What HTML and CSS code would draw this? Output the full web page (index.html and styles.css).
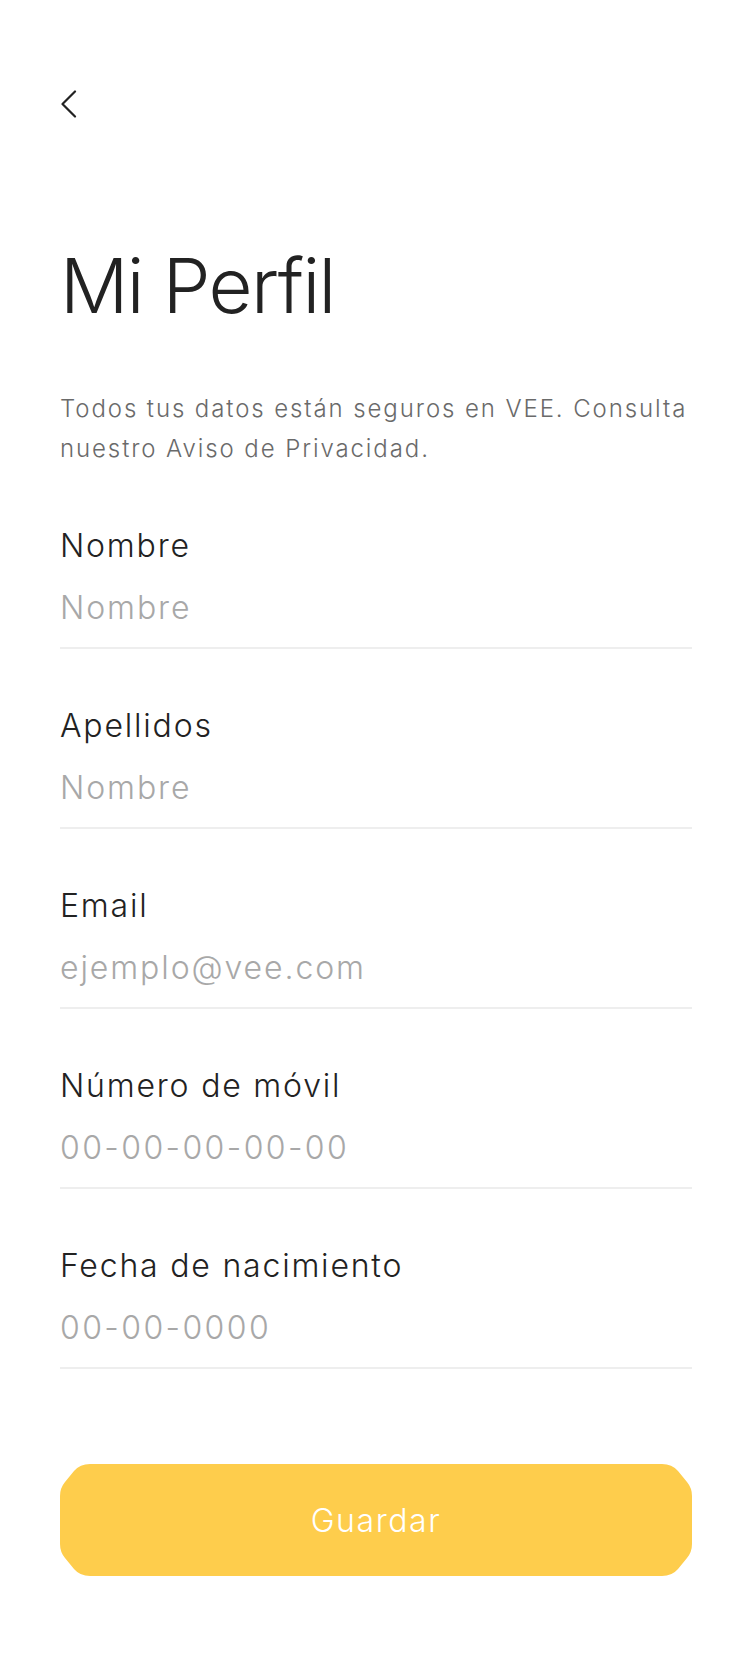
FILE: index.html
```html
<!DOCTYPE html>
<html lang="es">
<head>
<meta charset="utf-8">
<meta name="viewport" content="width=750">
<title>Mi Perfil</title>
<link rel="stylesheet" href="styles.css">
</head>
<body>
<main class="page">
  <header class="topbar">
    <button class="back" type="button" aria-label="Volver">
      <svg width="17" height="28" viewBox="0 0 17 28" fill="none" stroke="#222" stroke-width="2.2" stroke-linecap="round" stroke-linejoin="round"><path d="M15 1.5 L2.5 14 L15 26.5"/></svg>
    </button>
  </header>

  <h1 class="title">Mi Perfil</h1>
  <p class="intro">Todos tus datos están seguros en VEE. Consulta nuestro Aviso de Privacidad.</p>

  <form class="form">
    <div class="field">
      <span class="label">Nombre</span>
      <span class="value">Nombre</span>
    </div>
    <div class="field">
      <span class="label">Apellidos</span>
      <span class="value">Nombre</span>
    </div>
    <div class="field">
      <span class="label">Email</span>
      <span class="value">ejemplo@vee.com</span>
    </div>
    <div class="field">
      <span class="label">Número de móvil</span>
      <span class="value value--num">00-00-00-00-00</span>
    </div>
    <div class="field">
      <span class="label">Fecha de nacimiento</span>
      <span class="value value--num">00-00-0000</span>
    </div>

    <button class="save" type="button">Guardar</button>
  </form>
</main>
</body>
</html>
```

FILE: styles.css
```css
* { box-sizing: border-box; }

html, body {
  margin: 0;
  padding: 0;
  background: #ffffff;
}

body {
  font-family: Inter, "Noto Sans", "Liberation Sans", sans-serif;
  color: #222222;
}

.page {
  width: 750px;
  padding: 0 58px 0 60px;
}

.topbar {
  height: 240px;
  padding-top: 90px;
}

.back {
  display: block;
  margin: 0;
  padding: 0;
  border: 0;
  background: none;
  width: 17px;
  height: 28px;
}

.back svg { display: block; }

.title {
  margin: 0;
  font-size: 76px;
  line-height: 91px;
  font-weight: 300;
  letter-spacing: -1.6px;
  color: #222222;
}

.intro {
  margin: 58px 0 0;
  font-size: 24px;
  line-height: 40px;
  font-weight: 300;
  color: #6a6a6a;
  letter-spacing: 1.9px;
}

.form {
  display: flex;
  flex-direction: column;
}

.field {
  display: flex;
  flex-direction: column;
  margin-top: 57px;
  padding-bottom: 19px;
  border-bottom: 2px solid #eeeeee;
}

.label {
  font-size: 32px;
  line-height: 40px;
  font-weight: 300;
  letter-spacing: 1.8px;
  color: #222222;
}

.value {
  margin-top: 22px;
  font-size: 32px;
  line-height: 40px;
  font-weight: 300;
  letter-spacing: 1.9px;
  color: #a8a8a8;
}

.value--num {
  letter-spacing: 2.4px;
}

.save {
  margin-top: 95px;
  width: 632px;
  height: 112px;
  border: 0;
  padding: 0;
  background: #fecd4c;
  color: #ffffff;
  font-family: inherit;
  font-size: 32px;
  font-weight: 300;
  letter-spacing: 1.6px;
  clip-path: path("M 30 0 H 602 Q 612 0 618 7 L 627 18 Q 632 24 632 32 V 80 Q 632 88 627 94 L 618 105 Q 612 112 602 112 H 30 Q 20 112 14 105 L 5 94 Q 0 88 0 80 V 32 Q 0 24 5 18 L 14 7 Q 20 0 30 0 Z");
}
```
